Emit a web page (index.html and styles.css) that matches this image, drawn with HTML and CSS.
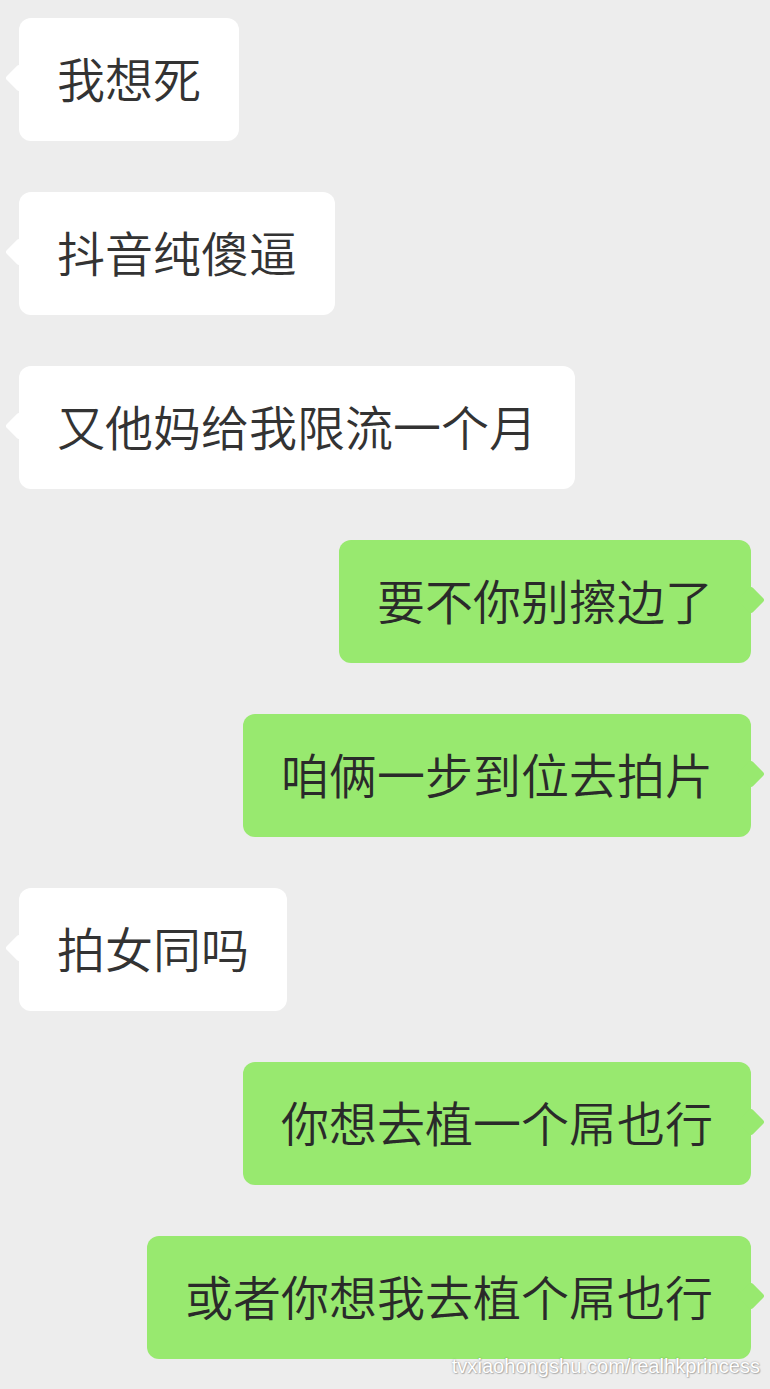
FILE: index.html
```html
<html>
<head>
<meta charset="utf-8">
<title>聊天记录</title>
<link rel="stylesheet" href="styles.css">
</head>
<body>

<div class="chat">
  <div class="row left"><div class="bubble">我想死</div></div>
  <div class="row left"><div class="bubble">抖音纯傻逼</div></div>
  <div class="row left"><div class="bubble">又他妈给我限流一个月</div></div>
  <div class="row right"><div class="bubble">要不你别擦边了</div></div>
  <div class="row right"><div class="bubble">咱俩一步到位去拍片</div></div>
  <div class="row left"><div class="bubble">拍女同吗</div></div>
  <div class="row right"><div class="bubble">你想去植一个屌也行</div></div>
  <div class="row right"><div class="bubble">或者你想我去植个屌也行</div></div>
</div>

<div class="watermark">tvxiaohongshu.com/realhkprincess</div>

</body>
</html>
```

FILE: styles.css
```css
html {
  background: #ededed;
}

body {
  margin: 0;
  height: 1389px;
  overflow: hidden;
  position: relative;
  font-family: "Noto Sans CJK SC", "Noto Sans", sans-serif;
  color: #333;
}

.chat {
  display: flex;
  flex-direction: column;
  gap: 51px;
  padding: 18px 19px 0;
}

.row {
  display: flex;
}
.row.right {
  justify-content: flex-end;
}

.bubble {
  position: relative;
  background: #fff;
  border-radius: 12px;
  font-size: 48px;
  font-weight: 350;
  line-height: 119px;
  height: 119px;
  padding: 0 38px 4px;
  white-space: nowrap;
}

/* little tail pointing at the speaker */
.bubble::before {
  content: "";
  position: absolute;
  top: 50px;
  width: 20px;
  height: 20px;
  background: inherit;
  border-radius: 3px;
  transform: rotate(45deg);
}
.left .bubble::before {
  left: -10px;
}

.right .bubble {
  background: #98e96f;
  color: #2a2a2a;
}
.right .bubble::before {
  right: -10px;
}

.watermark {
  position: absolute;
  right: 10px;
  top: 1355px;
  font: 20.1px "Liberation Sans", Arial, sans-serif;
  color: #fff;
  text-shadow: 0 0 2px rgba(0, 0, 0, 0.35), 1px 1px 1px rgba(0, 0, 0, 0.2);
}
```
